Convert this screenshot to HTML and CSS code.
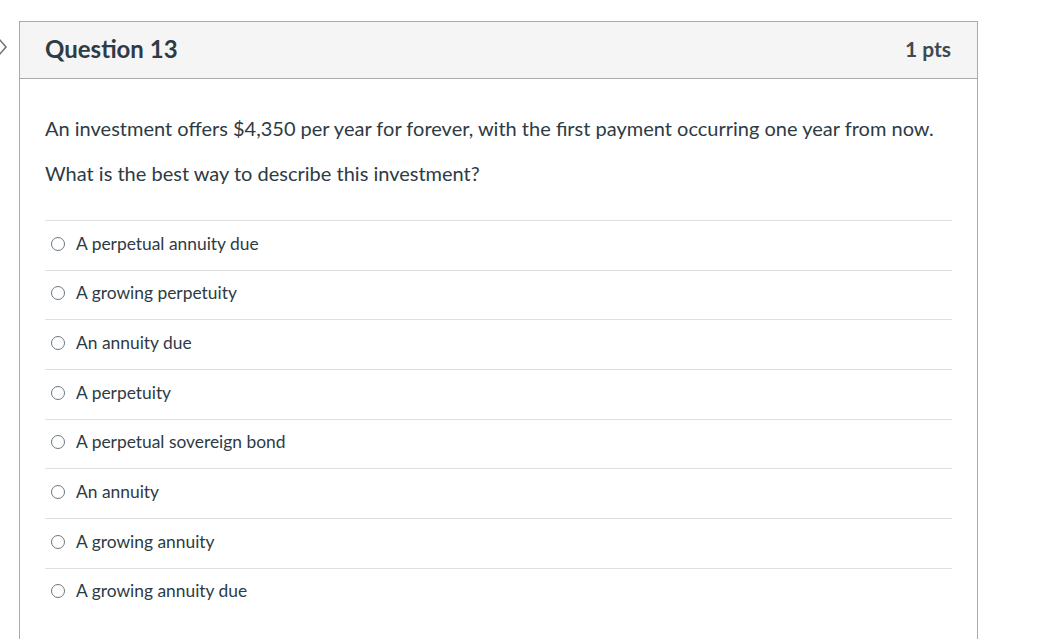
FILE: index.html
```html
<!DOCTYPE html>
<html>
<head>
<meta charset="utf-8">
<link rel="stylesheet" href="styles.css">
</head>
<body>
<div class="page">
  <div class="nav-chevron">
    <svg width="10" height="20" viewBox="0 0 10 20"><path d="M1 2 L8 10 L1 18" fill="none" stroke="#6b7780" stroke-width="1.6"/></svg>
  </div>
  <div class="question">
    <div class="header">
      <span class="title">Question 13</span>
      <span class="points">1 pts</span>
    </div>
    <div class="content">
      <p>An investment offers $4,350 per year for forever, with the first payment occurring one year from now.</p>
      <p>What is the best way to describe this investment?</p>
      <div class="answers">
        <label class="answer"><span class="radio"></span>A perpetual annuity due</label>
        <label class="answer"><span class="radio"></span>A growing perpetuity</label>
        <label class="answer"><span class="radio"></span>An annuity due</label>
        <label class="answer"><span class="radio"></span>A perpetuity</label>
        <label class="answer"><span class="radio"></span>A perpetual sovereign bond</label>
        <label class="answer"><span class="radio"></span>An annuity</label>
        <label class="answer"><span class="radio"></span>A growing annuity</label>
        <label class="answer last"><span class="radio"></span>A growing annuity due</label>
      </div>
    </div>
  </div>
</div>
</body>
</html>
```

FILE: styles.css
```css
html, body {
  margin: 0;
  padding: 0;
  background: #ffffff;
  overflow: hidden;
}
body {
  font-family: Lato, "Open Sans", sans-serif;
  color: #2d3b45;
}
.page {
  position: relative;
  padding: 21px 0 0 19px;
}
.nav-chevron {
  position: absolute;
  left: -2px;
  top: 37px;
}
.question {
  width: 957px;
  border: 1px solid #aaaaaa;
  border-bottom: none;
  min-height: 700px;
}
.header {
  display: flex;
  justify-content: space-between;
  align-items: center;
  height: 53px;
  padding: 0 26px 3px 25px;
  background: #f5f5f5;
  border-bottom: 1px solid #aaaaaa;
}
.title {
  font-size: 24px;
  font-weight: 700;
}
.points {
  font-size: 21px;
  font-weight: 700;
  color: #3d4a52;
}
.content {
  padding: 18px 25px 0 25px;
}
.content p {
  font-size: 20px;
  line-height: 27px;
  margin: 18px 0;
}
.answers {
  margin-top: 33px;
}
.answer {
  display: flex;
  align-items: center;
  font-size: 17.4px;
  line-height: 24px;
  padding: 10.5px 0 14.2px 6px;
  border-top: 1px solid #dde0e3;
}
.radio {
  width: 12px;
  height: 12px;
  border: 1px solid #6b7780;
  border-radius: 50%;
  margin-right: 11px;
  flex: none;
}
```
